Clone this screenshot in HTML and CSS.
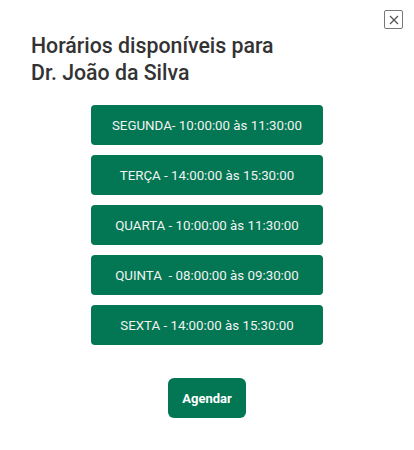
FILE: index.html
```html
<!DOCTYPE html>
<html lang="pt-BR">
<head>
<meta charset="utf-8">
<link rel="stylesheet" href="styles.css">
</head>
<body>
<div class="modal">
  <button class="close" aria-label="Fechar">
    <svg width="10" height="10" viewBox="0 0 10 10"><path d="M1 1L9 9M9 1L1 9" stroke="#555" stroke-width="1.3" fill="none"/></svg>
  </button>
  <h1 class="title">Horários disponíveis para<br>Dr. João da Silva</h1>
  <div class="slots">
    <button class="slot">SEGUNDA- 10:00:00 às 11:30:00</button>
    <button class="slot">TERÇA - 14:00:00 às 15:30:00</button>
    <button class="slot">QUARTA - 10:00:00 às 11:30:00</button>
    <button class="slot">QUINTA &nbsp;- 08:00:00 às 09:30:00</button>
    <button class="slot">SEXTA - 14:00:00 às 15:30:00</button>
  </div>
  <div class="actions">
    <button class="schedule">Agendar</button>
  </div>
</div>
</body>
</html>
```
FILE: styles.css
```css
html, body {
  margin: 0;
  padding: 0;
  background: #fff;
}
body {
  font-family: Roboto, "Liberation Sans", sans-serif;
  width: 414px;
  height: 450px;
}
.modal {
  position: relative;
  padding: 32px 0 0 31px;
  box-sizing: border-box;
  height: 450px;
}
.close {
  position: absolute;
  top: 10px;
  left: 384px;
  width: 19px;
  height: 19px;
  padding: 0;
  border: 1px solid #777;
  border-radius: 2px;
  background: #fff;
  display: flex;
  align-items: center;
  justify-content: center;
}
.title {
  margin: 0;
  font-size: 21.3px;
  font-weight: 500;
  line-height: 27px;
  color: #333;
}
.slots {
  margin-left: -31px;
  margin-top: 19px;
  display: flex;
  flex-direction: column;
  align-items: center;
  gap: 10px;
}
.slot {
  width: 232px;
  height: 40px;
  border: 0;
  border-radius: 4px;
  background: #037753;
  color: #f2f2f2;
  font-family: Roboto, "Liberation Sans", sans-serif;
  font-size: 13.3px;
  font-weight: 400;
  padding: 0;
}
.actions {
  margin-left: -31px;
  margin-top: 33px;
  display: flex;
  justify-content: center;
}
.schedule {
  width: 78px;
  height: 40px;
  border: 0;
  border-radius: 6px;
  background: #037753;
  color: #fff;
  font-family: Roboto, "Liberation Sans", sans-serif;
  font-size: 13px;
  font-weight: 700;
  padding: 0;
}
```
